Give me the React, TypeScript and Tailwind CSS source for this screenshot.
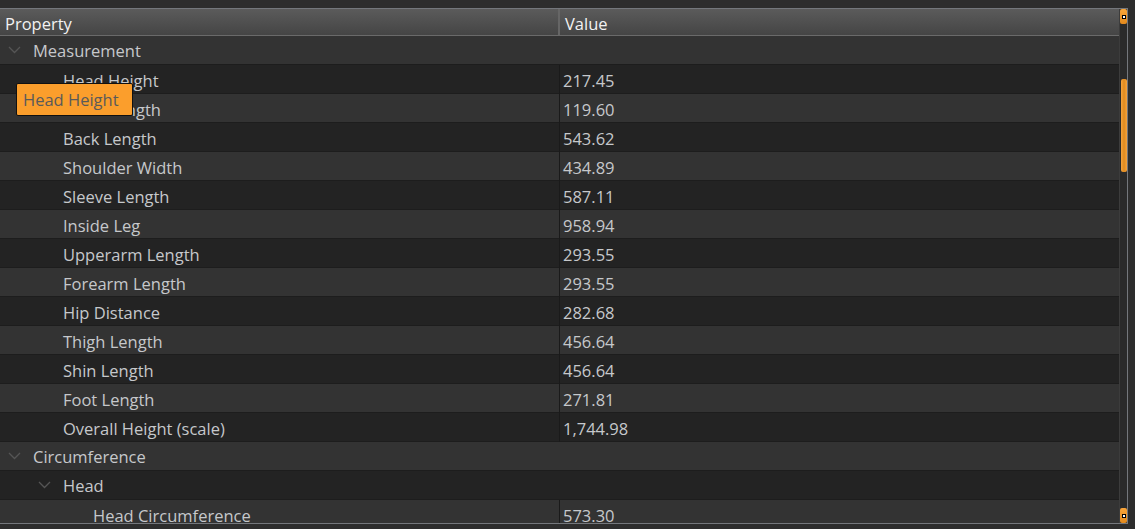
import React from "react";

type Row =
  | { kind: "cat"; label: string; depth: number }
  | { kind: "item"; label: string; value: string; depth: number };

const rows: Row[] = [
  { kind: "cat", label: "Measurement", depth: 0 },
  { kind: "item", label: "Head Height", value: "217.45", depth: 1 },
  { kind: "item", label: "Head Length", value: "119.60", depth: 1 },
  { kind: "item", label: "Back Length", value: "543.62", depth: 1 },
  { kind: "item", label: "Shoulder Width", value: "434.89", depth: 1 },
  { kind: "item", label: "Sleeve Length", value: "587.11", depth: 1 },
  { kind: "item", label: "Inside Leg", value: "958.94", depth: 1 },
  { kind: "item", label: "Upperarm Length", value: "293.55", depth: 1 },
  { kind: "item", label: "Forearm Length", value: "293.55", depth: 1 },
  { kind: "item", label: "Hip Distance", value: "282.68", depth: 1 },
  { kind: "item", label: "Thigh Length", value: "456.64", depth: 1 },
  { kind: "item", label: "Shin Length", value: "456.64", depth: 1 },
  { kind: "item", label: "Foot Length", value: "271.81", depth: 1 },
  { kind: "item", label: "Overall Height (scale)", value: "1,744.98", depth: 1 },
  { kind: "cat", label: "Circumference", depth: 0 },
  { kind: "cat", label: "Head", depth: 1 },
  { kind: "item", label: "Head Circumference", value: "573.30", depth: 2 },
];

const indent = ["pl-[33px]", "pl-[63px]", "pl-[93px]"];
const chevronPad = ["pl-[8px]", "pl-[38px]", "pl-[68px]"];

function Chevron() {
  return (
    <svg width="13" height="8" viewBox="0 0 13 8" className="shrink-0">
      <polyline points="1,1 6.5,6.5 12,1" fill="none" stroke="#555" strokeWidth="1.3" />
    </svg>
  );
}

function ScrollButton() {
  return (
    <div className="h-[15px] w-[7px] mx-auto rounded-[2px] bg-gradient-to-b from-[#f9a53a] to-[#e38a1c] flex items-center justify-center">
      <div className="w-[4px] h-[4px] bg-black flex items-center justify-center">
        <div className="w-[2px] h-[2px] bg-white" />
      </div>
    </div>
  );
}

export default function App() {
  return (
    <div className="w-[1135px] h-[529px] bg-[#2d2d2d] pt-[8px] overflow-hidden relative" style={{ fontFamily: '"Open Sans", "Noto Sans", sans-serif' }}>
      <div className="w-[1128px] h-[516px] border-t border-r border-b border-[#74777c] flex overflow-hidden">
        <div className="w-[1119px] flex flex-col overflow-hidden">
          <div className="h-[27px] shrink-0 flex bg-gradient-to-b from-[#5b5b5b] to-[#454545] border-b border-[#6a6a6a] text-[#f2f2f2] text-[16.5px] leading-[29px]">
            <div className="w-[560px] pl-[5px] border-r-2 border-[#666]">Property</div>
            <div className="flex-1 pl-[5px]">Value</div>
          </div>
          {rows.map((r, i) => {
            const bg = i % 2 === 0 ? "bg-[#333333]" : "bg-[#232323]";
            if (r.kind === "cat") {
              return (
                <div key={i} className={`h-[29px] shrink-0 flex items-center border-b border-[#1d1d1d] ${bg} ${chevronPad[r.depth]} text-[#c6c8cb] text-[16.5px]`}>
                  <Chevron />
                  <span className="ml-[12px] pt-[3px]">{r.label}</span>
                </div>
              );
            }
            return (
              <div key={i} className={`h-[29px] shrink-0 grid grid-cols-[560px_1fr] border-b border-[#1d1d1d] ${bg} text-[#c6c8cb] text-[16.5px] leading-[31px]`}>
                <div className={`${indent[r.depth]} border-r border-[#1a1a1a]`}>{r.label}</div>
                <div className="pl-[3px]">{r.value}</div>
              </div>
            );
          })}
        </div>
        <div className="flex-1 flex flex-col bg-[#2a2a2a] border-l border-[#3c3c3c]">
          <ScrollButton />
          <div className="h-[55px]" />
          <div className="h-[93px] w-[6px] mx-auto rounded-[2px] bg-gradient-to-r from-[#f7a33a] via-[#df8a1e] to-[#f7a33a]" />
          <div className="flex-1" />
          <ScrollButton />
        </div>
      </div>
      <div className="absolute left-[16px] top-[83px] w-[117px] h-[33px] pl-[6px] bg-[#fb9e2c] border border-[#111] rounded-[2px] text-[#5a5a5a] text-[16.5px] leading-[31px]">
        Head Height
      </div>
    </div>
  );
}
